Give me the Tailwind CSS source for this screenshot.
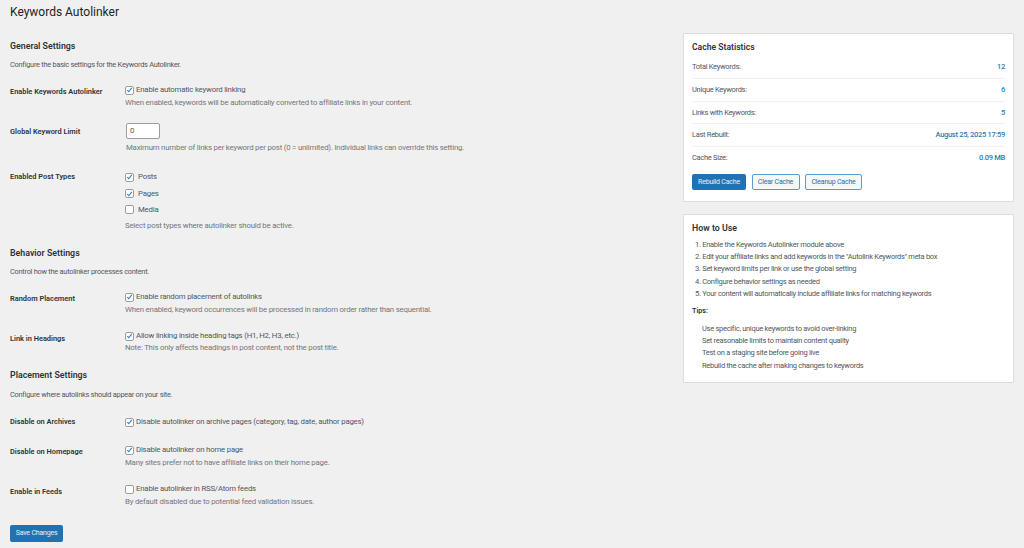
<!DOCTYPE html>
<html lang="en">
<head>
  <meta charset="UTF-8">
  <title>Keywords Autolinker</title>
  <script src="https://cdn.jsdelivr.net/npm/@tailwindcss/browser@4"></script>
</head>
<body class="bg-[#f0f0f1] h-[548px] w-[1024px] overflow-hidden font-['Roboto',sans-serif] text-[7.8px] tracking-[-0.2px] leading-[12px] text-[#50575e]">
  <div class="flex">
    <!-- LEFT COLUMN -->
    <div class="w-[683px] pl-[10px]">
      <h1 class="text-[12px] tracking-normal leading-[20px] mt-[2px] text-[#1d2327]">Keywords Autolinker</h1>

      <h2 class="text-[8.8px] tracking-normal leading-[14px] font-semibold text-[#2c3338] mt-[17px]">General Settings</h2>
      <p class="mt-[6px] text-[7.4px] tracking-[-0.26px]">Configure the basic settings for the Keywords Autolinker.</p>

      <div class="flex mt-[13px] h-[39px]">
        <div class="w-[115px] font-semibold text-[#2c3338] pt-[2px] text-[7.4px] tracking-normal">Enable Keywords Autolinker</div>
        <div>
          <label class="flex items-center h-[12px]">
            <span class="w-[9px] h-[9px] mr-[2px] bg-white border border-[#9a9da2] rounded-[2px] flex items-center justify-center"><svg class="w-[8px] h-[8px]" viewBox="0 0 8 8"><path d="M1.5 4.2 3.2 6 6.6 1.6" fill="none" stroke="#3582c4" stroke-width="1.3"/></svg></span>
            Enable automatic keyword linking
          </label>
          <p class="mt-[1px] text-[#72777c]">When enabled, keywords will be automatically converted to affiliate links in your content.</p>
        </div>
      </div>

      <div class="flex h-[48px]">
        <div class="w-[116px] font-semibold text-[#2c3338] pt-[3px] text-[7.4px] tracking-normal">Global Keyword Limit</div>
        <div>
          <div class="w-[34px] h-[16px] bg-white border border-[#9a9da2] rounded-[2px] flex items-center pl-[3px]">0</div>
          <p class="mt-[3px] text-[#72777c]">Maximum number of links per keyword per post (0 = unlimited). Individual links can override this setting.</p>
        </div>
      </div>

      <div class="flex">
        <div class="w-[115px] font-semibold text-[#2c3338] text-[7.4px] tracking-normal">Enabled Post Types</div>
        <div>
          <label class="flex items-center h-[12px] mb-[4.5px]">
            <span class="w-[9px] h-[9px] mr-[4px] bg-white border border-[#9a9da2] rounded-[2px] flex items-center justify-center"><svg class="w-[8px] h-[8px]" viewBox="0 0 8 8"><path d="M1.5 4.2 3.2 6 6.6 1.6" fill="none" stroke="#3582c4" stroke-width="1.3"/></svg></span>
            Posts
          </label>
          <label class="flex items-center h-[12px] mb-[4px]">
            <span class="w-[9px] h-[9px] mr-[4px] bg-white border border-[#9a9da2] rounded-[2px] flex items-center justify-center"><svg class="w-[8px] h-[8px]" viewBox="0 0 8 8"><path d="M1.5 4.2 3.2 6 6.6 1.6" fill="none" stroke="#3582c4" stroke-width="1.3"/></svg></span>
            Pages
          </label>
          <label class="flex items-center h-[12px] mb-[4.5px]">
            <span class="w-[9px] h-[9px] mr-[4px] bg-white border border-[#9a9da2] rounded-[2px]"></span>
            Media
          </label>
          <p class="text-[#72777c]">Select post types where autolinker should be active.</p>
        </div>
      </div>

      <h2 class="text-[8.8px] tracking-normal leading-[14px] font-semibold text-[#2c3338] mt-[14px]">Behavior Settings</h2>
      <p class="mt-[6px] text-[7.4px] tracking-[-0.26px]">Control how the autolinker processes content.</p>

      <div class="flex mt-[13px] h-[39px]">
        <div class="w-[115px] font-semibold text-[#2c3338] pt-[2px] text-[7.4px] tracking-normal">Random Placement</div>
        <div>
          <label class="flex items-center h-[12px]">
            <span class="w-[9px] h-[9px] mr-[2px] bg-white border border-[#9a9da2] rounded-[2px] flex items-center justify-center"><svg class="w-[8px] h-[8px]" viewBox="0 0 8 8"><path d="M1.5 4.2 3.2 6 6.6 1.6" fill="none" stroke="#3582c4" stroke-width="1.3"/></svg></span>
            Enable random placement of autolinks
          </label>
          <p class="mt-[1px] text-[#72777c]">When enabled, keyword occurrences will be processed in random order rather than sequential.</p>
        </div>
      </div>

      <div class="flex h-[38px]">
        <div class="w-[115px] font-semibold text-[#2c3338] pt-[3px] text-[7.4px] tracking-normal">Link in Headings</div>
        <div>
          <label class="flex items-center h-[12px]">
            <span class="w-[9px] h-[9px] mr-[2px] bg-white border border-[#9a9da2] rounded-[2px] flex items-center justify-center"><svg class="w-[8px] h-[8px]" viewBox="0 0 8 8"><path d="M1.5 4.2 3.2 6 6.6 1.6" fill="none" stroke="#3582c4" stroke-width="1.3"/></svg></span>
            Allow linking inside heading tags (H1, H2, H3, etc.)
          </label>
          <p class="text-[#72777c]">Note: This only affects headings in post content, not the post title.</p>
        </div>
      </div>

      <h2 class="text-[8.8px] tracking-normal leading-[14px] font-semibold text-[#2c3338]">Placement Settings</h2>
      <p class="mt-[7px] text-[7.4px] tracking-[-0.26px]">Configure where autolinks should appear on your site.</p>

      <div class="flex mt-[15px] h-[28px]">
        <div class="w-[115px] font-semibold text-[#2c3338] text-[7.4px] tracking-normal">Disable on Archives</div>
        <label class="flex items-center h-[12px]">
          <span class="w-[9px] h-[9px] mr-[2px] bg-white border border-[#9a9da2] rounded-[2px] flex items-center justify-center"><svg class="w-[8px] h-[8px]" viewBox="0 0 8 8"><path d="M1.5 4.2 3.2 6 6.6 1.6" fill="none" stroke="#3582c4" stroke-width="1.3"/></svg></span>
          Disable autolinker on archive pages (category, tag, date, author pages)
        </label>
      </div>

      <div class="flex h-[39px]">
        <div class="w-[115px] font-semibold text-[#2c3338] pt-[2px] text-[7.4px] tracking-normal">Disable on Homepage</div>
        <div>
          <label class="flex items-center h-[12px]">
            <span class="w-[9px] h-[9px] mr-[2px] bg-white border border-[#9a9da2] rounded-[2px] flex items-center justify-center"><svg class="w-[8px] h-[8px]" viewBox="0 0 8 8"><path d="M1.5 4.2 3.2 6 6.6 1.6" fill="none" stroke="#3582c4" stroke-width="1.3"/></svg></span>
            Disable autolinker on home page
          </label>
          <p class="mt-[1px] text-[#72777c]">Many sites prefer not to have affiliate links on their home page.</p>
        </div>
      </div>

      <div class="flex h-[42px]">
        <div class="w-[115px] font-semibold text-[#2c3338] pt-[3px] text-[7.4px] tracking-normal">Enable in Feeds</div>
        <div>
          <label class="flex items-center h-[12px]">
            <span class="w-[9px] h-[9px] mr-[2px] bg-white border border-[#9a9da2] rounded-[2px]"></span>
            Enable autolinker in RSS/Atom feeds
          </label>
          <p class="mt-[1px] text-[#72777c]">By default disabled due to potential feed validation issues.</p>
        </div>
      </div>

      <button class="w-[53px] h-[17px] bg-[#2271b1] rounded-[2px] text-white/90 text-[7px] tracking-[-0.2px] leading-[17px] whitespace-nowrap">Save Changes</button>
    </div>

    <!-- RIGHT COLUMN -->
    <div class="w-[331px] pt-[33px]">
      <div class="h-[169px] bg-white border border-[#dcdcde] rounded-[1px] px-[8px] pt-[6px]">
        <h3 class="text-[8.6px] tracking-normal leading-[14px] font-semibold text-[#2c3338]">Cache Statistics</h3>
        <div class="mt-[2px] text-[7.5px] tracking-[-0.3px]">
          <div class="flex justify-between h-[23px] pt-[5px] border-b border-[#f0f0f1]"><span>Total Keywords:</span><span class="font-medium text-[#2a7db5]">12</span></div>
          <div class="flex justify-between h-[23px] pt-[5px] border-b border-[#f0f0f1]"><span>Unique Keywords:</span><span class="font-medium text-[#2a7db5]">6</span></div>
          <div class="flex justify-between h-[22px] pt-[5px] border-b border-[#f0f0f1]"><span>Links with Keywords:</span><span class="font-medium text-[#2a7db5]">5</span></div>
          <div class="flex justify-between h-[23px] pt-[5px] border-b border-[#f0f0f1]"><span>Last Rebuilt:</span><span class="font-medium text-[#2a7db5]">August 25, 2025 17:59</span></div>
          <div class="flex justify-between h-[23px] pt-[5px]"><span>Cache Size:</span><span class="font-medium text-[#2a7db5]">0.09 MB</span></div>
        </div>
        <div class="flex gap-[5.5px] mt-[4px]">
          <button class="w-[54px] h-[16px] bg-[#2271b1] rounded-[2px] text-white/90 text-[7px] tracking-[-0.2px] leading-[16px] whitespace-nowrap">Rebuild Cache</button>
          <button class="w-[48px] h-[16px] bg-[#f6f7f7] border border-[#5b9dd0] rounded-[2px] text-[#2271b1] text-[7px] tracking-[-0.2px] leading-[14px] whitespace-nowrap">Clear Cache</button>
          <button class="w-[57px] h-[16px] bg-[#f6f7f7] border border-[#5b9dd0] rounded-[2px] text-[#2271b1] text-[7px] tracking-[-0.2px] leading-[14px] whitespace-nowrap">Cleanup Cache</button>
        </div>
      </div>

      <div class="h-[169px] mt-[12px] bg-white border border-[#dcdcde] rounded-[1px] px-[8px] pt-[6px]">
        <h3 class="text-[8.8px] tracking-normal leading-[14px] font-semibold text-[#2c3338]">How to Use</h3>
        <ol class="mt-[4px] pl-[3px] leading-[12.2px] text-[7.5px] tracking-[-0.28px]">
          <li>1. Enable the Keywords Autolinker module above</li>
          <li>2. Edit your affiliate links and add keywords in the "Autolink Keywords" meta box</li>
          <li>3. Set keyword limits per link or use the global setting</li>
          <li>4. Configure behavior settings as needed</li>
          <li>5. Your content will automatically include affiliate links for matching keywords</li>
        </ol>
        <p class="font-semibold text-[#2c3338] mt-[5px] text-[7.2px] tracking-normal">Tips:</p>
        <ul class="mt-[6px] pl-[10px] leading-[12.2px] text-[7.5px] tracking-[-0.28px]">
          <li>Use specific, unique keywords to avoid over-linking</li>
          <li>Set reasonable limits to maintain content quality</li>
          <li>Test on a staging site before going live</li>
          <li>Rebuild the cache after making changes to keywords</li>
        </ul>
      </div>
    </div>
  </div>
</body>
</html>
